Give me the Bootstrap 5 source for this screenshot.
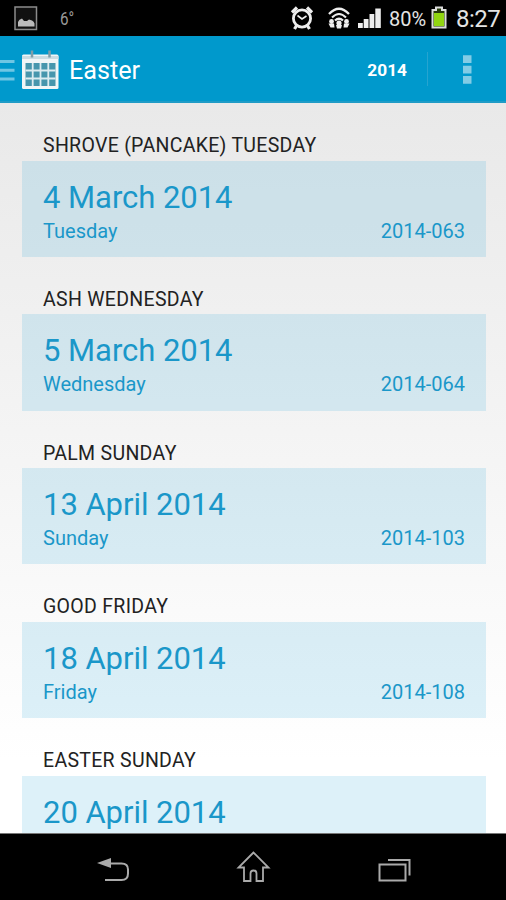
<!DOCTYPE html>
<html lang="en">
<head>
<meta charset="utf-8">
<meta name="viewport" content="width=device-width, initial-scale=1">
<title>Easter</title>
<link href="https://cdn.jsdelivr.net/npm/bootstrap@5.3.0/dist/css/bootstrap.min.css" rel="stylesheet">
<style>
body{font-family:Roboto,"Noto Sans",sans-serif;line-height:1}
.screen{height:900px;background:#000}
.status{height:36px;color:#e4e4e4}
.appbar{height:67px;background:#0099cc;border-bottom:2px solid #1f9bc6}
.content{background:linear-gradient(#e9e9e9,#fff 90%);padding:0 20px 0 22px}
.event{height:153.8px;padding-top:25.5px}
.event-name{font-size:19.5px;line-height:24px;height:32px;padding:5.500px 0 0 21px;color:#222;letter-spacing:.3px}
.event-box{height:96.3px;background:rgba(40,168,214,.155);color:#1a97c9;padding:19px 21px 0}
.date{font-size:31px;line-height:36px;letter-spacing:-.04px}
.info{font-size:20px;line-height:24px;margin-top:3px}
.year{font-size:17.3px;margin-right:20px;padding-top:5px}
.title{font-size:25.2px;padding-top:5px}
.sep{width:1px;height:34px;background:#26a4d0}
.deg{font-size:19px;color:#999;transform:scaleX(.8);transform-origin:left;padding-top:1px}
.pct{font-size:20px;width:41px;margin-left:3px;padding-top:2px}
.clock{font-size:24px;letter-spacing:-.5px;width:50px;margin-left:2px;padding-top:2px}
.sysnav{height:67px;border-top:1px solid #777}
svg{display:block;flex:none}
</style>
<script src="https://cdn.jsdelivr.net/npm/bootstrap@5.3.0/dist/js/bootstrap.bundle.min.js"></script>
</head>
<body>
<div class="screen d-flex flex-column overflow-hidden">
<div class="status d-flex align-items-center flex-shrink-0">
<svg width="60" height="36" viewBox="0 0 60 36"><path d="M15 7h21.500v22.500H15z" fill="#111" stroke="#8c8c8c" stroke-width="1.500"/><path d="M18 26.500v-4.500q1-3 4-3.500l2 2.500h3l2-1.500 3 1q2 1 2.500 3v3z" fill="#bbb"/></svg>
<span class="deg">6°</span>
<svg class="ms-auto" width="106" height="36" viewBox="281 0 106 36">
<g fill="none" stroke="#eee" stroke-width="2.800"><circle cx="303" cy="18.500" r="8.600"/><path d="M298.500 15.500l4.500 3.500 4.500-3" stroke-width="1.600"/><path d="M293 12.500l5-5M313 12.500l-5-5M295.500 29l2.500-4M310.500 29l-2.500-4" stroke-width="3.200"/></g>
<g fill="none" stroke="#eee" stroke-width="2.300"><path d="M330 14q10-10.500 20 0"/><path d="M333 17.500q7-7 14 0" stroke-width="2"/><path d="M336 20.500q4-3.500 8 0"/></g>
<g fill="#eee"><circle cx="340" cy="23" r="2.600"/><path d="M337 25h6l-1 3.500h-4z"/><circle cx="332.500" cy="21.500" r="2.400"/><path d="M329.500 23.500h5.500l.5 4h-4z"/><circle cx="347.500" cy="21.500" r="2.400"/><path d="M345 23.500h5.500l-2 4h-4z"/><path d="M359 23h4.800v5H359zM364.700 19h4.800v9h-4.800zM370.500 14h4.800v14h-4.800zM376.300 8.500h5.500V28h-5.500z"/></g></svg>
<span class="pct">80%</span>
<svg width="24" height="36" viewBox="430 0 24 36"><path d="M436 7.500h6v2.500h3.500v17.500h-13V10h3.500z" fill="#273a0c" stroke="#ddd" stroke-width="2"/><path d="M434 13h10v13h-10z" fill="#91d511"/></svg>
<span class="clock">8:27</span>
</div>
<div class="appbar d-flex align-items-center flex-shrink-0 text-white">
<svg width="69" height="65" viewBox="0 36 69 65"><path d="M0 61.500h14.500M0 70.300h14.500M0 79h14.500" stroke="#6fc6e3" stroke-width="3"/><rect x="22" y="54.500" width="36.500" height="34.500" rx="1.500" fill="#f1f5f6"/><path d="M22 57.500h36.500" stroke="#cbdce2" stroke-width="3"/><path d="M32 57.500v-7M49.500 57.500v-7" stroke="#809da8" stroke-width="2.500"/><path d="M25.500 63h30v23h-30z" fill="#4796ad"/><path d="M32.700 63v23M40.500 63v23M48.300 63v23M25.500 70.500h30M25.500 78.500h30" stroke="#dcebf0" stroke-width="1.800"/></svg>
<span class="title">Easter</span>
<span class="year fw-bold ms-auto">2014</span>
<div class="sep"></div>
<svg width="78" height="65" viewBox="428 36 78 65"><path d="M463 55.300h8.500v7.700H463zM463 65.700h8.500v7.700H463zM463 76h8.500v7.700H463z" fill="#83cce5"/></svg>
</div>
<main class="content flex-grow-1 overflow-hidden">
<section class="event"><div class="event-name">SHROVE (PANCAKE) TUESDAY</div><div class="event-box"><div class="date">4 March 2014</div><div class="info d-flex justify-content-between"><span>Tuesday</span><span>2014-063</span></div></div></section>
<section class="event"><div class="event-name">ASH WEDNESDAY</div><div class="event-box"><div class="date">5 March 2014</div><div class="info d-flex justify-content-between"><span>Wednesday</span><span>2014-064</span></div></div></section>
<section class="event"><div class="event-name">PALM SUNDAY</div><div class="event-box"><div class="date">13 April 2014</div><div class="info d-flex justify-content-between"><span>Sunday</span><span>2014-103</span></div></div></section>
<section class="event"><div class="event-name">GOOD FRIDAY</div><div class="event-box"><div class="date">18 April 2014</div><div class="info d-flex justify-content-between"><span>Friday</span><span>2014-108</span></div></div></section>
<section class="event"><div class="event-name">EASTER SUNDAY</div><div class="event-box"><div class="date">20 April 2014</div></div></section>
</main>
<div class="sysnav flex-shrink-0">
<svg width="506" height="66" viewBox="0 834 506 66" fill="none" stroke="#aaa" stroke-width="2"><path d="M105 880h16.500q6.500 0 6.500-6.500v-4q0-6-6.500-6H108"/><path d="M97 863l14-5v10z" fill="#aaa" stroke="none"/><path d="M253.500 852.500l-15 15h5.500v13.500h6.500v-7.500q0-3 3-3t3 3v7.500h6.500v-13.500h5.500z" stroke-width="1.800"/><path d="M379.500 864.500h26v16h-26z"/><path d="M388 860h21.500v15.500"/></svg>
</div>
</div>
</body>
</html>
